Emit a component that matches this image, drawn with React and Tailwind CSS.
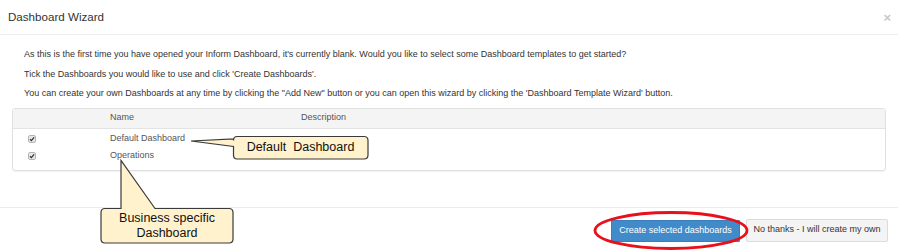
const font = { fontFamily: '"Liberation Sans", Arial, sans-serif' }

const ROWS = ['Default Dashboard', 'Operations']

function Tick() {
  return (
    <svg width="8" height="8" viewBox="0 0 8 8" className="shrink-0">
      <rect x="0.5" y="0.5" width="7" height="7" rx="1.5" fill="#e8e8e8" stroke="#b5b5b5" />
      <path d="M2 4.2 L3.4 5.6 L6.1 2.3" fill="none" stroke="#333" strokeWidth="1.3" />
    </svg>
  )
}

function Overlay() {
  return (
    <svg className="absolute left-0 top-0 pointer-events-none" width="898" height="251">
      {/* callout pointing at Default Dashboard */}
      <path
        d="M237 136.5 H364 Q368 136.5 368 140.5 V155 Q368 159 364 159 H237 Q233.5 159 233.5 155 V146.5 L191 141 L233.5 139 V140.5 Q233.5 136.5 237 136.5 Z"
        fill="#fff2cc" stroke="#3a3a3a" strokeWidth="1.2" />
      {/* callout pointing at Operations */}
      <path
        d="M105 208.5 H121 V160.5 L155 208.5 H229 Q233 208.5 233 212.5 V239 Q233 243 229 243 H105 Q101 243 101 239 V212.5 Q101 208.5 105 208.5 Z"
        fill="#fff2cc" stroke="#3a3a3a" strokeWidth="1.2" />
      <ellipse cx="671" cy="230.5" rx="76" ry="18" fill="none" stroke="#e8111b" strokeWidth="2.8" />
    </svg>
  )
}

export default function App() {
  return (
    <div className="relative w-[898px] h-[251px] bg-white text-[#333] overflow-hidden" style={font}>
      <div className="h-[35px] flex items-center justify-between pl-2 pr-[7px] border-b border-[#ececec]">
        <h4 className="text-[11.6px] text-[#333]">Dashboard Wizard</h4>
        <span className="text-[13px] font-bold text-[#c8c8c8] leading-none">×</span>
      </div>

      <div className="pt-[10px] px-3">
        <div className="px-3 text-[9px] leading-[19.5px] text-[#333]">
          <p>As this is the first time you have opened your Inform Dashboard, it's currently blank. Would you like to select some Dashboard templates to get started?</p>
          <p>Tick the Dashboards you would like to use and click 'Create Dashboards'.</p>
          <p>You can create your own Dashboards at any time by clicking the "Add New" button or you can open this wizard by clicking the 'Dashboard Template Wizard' button.</p>
        </div>

        <div className="mt-[4px] h-[63px] border border-[#e0e0e0] rounded-[3px] shadow-[0_1px_1px_rgba(0,0,0,0.05)] text-[9px] text-[#555]">
          <div className="h-[20px] flex items-center bg-[#f4f4f4] border-b border-[#e3e3e3]">
            <span className="w-[97px]" />
            <span className="w-[191px]">Name</span>
            <span>Description</span>
          </div>
          <div className="pt-[2px]">
            {ROWS.map(r => (
              <div key={r} className="h-[17px] flex items-center">
                <span className="w-[97px] pl-[15px] flex"><Tick /></span>
                <span>{r}</span>
              </div>
            ))}
          </div>
        </div>
      </div>

      <div className="mt-[36px] border-t border-[#ececec] pt-[12px] pr-[10px] flex justify-end gap-[6px]">
        <button className="h-[22px] w-[129px] bg-[#428bca] border border-[#3a7fbb] text-white text-[9px] rounded-[1px]">
          Create selected dashboards
        </button>
        <button className="h-[23px] w-[142px] -mt-[1px] bg-[#f4f4f4] border border-[#dcdcdc] text-[#333] text-[9px] rounded-[2px]">
          No thanks - I will create my own
        </button>
      </div>

      <Overlay />

      <div className="absolute left-[233px] top-[136px] w-[135px] h-[23px] flex items-center justify-center text-[12.5px] text-[#111] whitespace-pre">
        Default  Dashboard
      </div>
      <div className="absolute left-[101px] top-[208px] w-[132px] h-[35px] flex flex-col items-center justify-center text-[12.5px] leading-[15px] text-[#111]">
        <span>Business specific</span>
        <span>Dashboard</span>
      </div>
    </div>
  )
}
